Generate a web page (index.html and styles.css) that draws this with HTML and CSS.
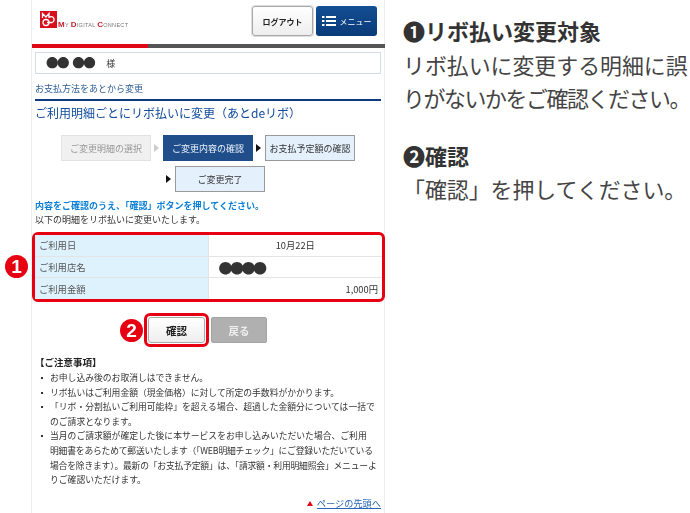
FILE: index.html
```html
<!DOCTYPE html>
<html lang="ja">
<head>
<meta charset="utf-8">
<title>ご利用明細ごとにリボ払いに変更</title>
<link rel="stylesheet" href="styles.css">
</head>
<body>
<div class="page">
  <main class="phone">
    <header class="top">
      <div class="logo">
        <svg class="logo-mark" width="17" height="17" viewBox="0 0 17 17"><rect width="17" height="17" fill="#d9101c"/><g fill="none" stroke="#fff" stroke-width="1.3"><path d="M2.500 7V2.500L6 6l3-3.500V7"/><circle cx="6" cy="11.500" r="3"/><path d="M9 6.500a3 3 0 1 1 3 5H7"/></g></svg>
        <span class="logo-text"><b>M</b>Y <b>D</b>IGITAL <b>C</b>ONNECT</span>
      </div>
      <div class="top-btns">
        <span class="btn-logout">ログアウト</span>
        <span class="btn-menu">
          <svg width="14" height="10" viewBox="0 0 14 10"><g fill="#fff"><rect x="0" y="0" width="2.500" height="2"/><rect x="0" y="4" width="2.500" height="2"/><rect x="0" y="8" width="2.500" height="2"/><rect x="4" y="0" width="10" height="2"/><rect x="4" y="4" width="10" height="2"/><rect x="4" y="8" width="10" height="2"/></g></svg>
          <span>メニュー</span>
        </span>
      </div>
    </header>
    <div class="progress"><span class="progress-red"></span></div>
    <div class="name-box"><span class="name-dots">●● ●●</span><span class="name-sama">様</span></div>
    <p class="crumb">お支払方法をあとから変更</p>
    <h1 class="title">ご利用明細ごとにリボ払いに変更（あとdeリボ）</h1>
    <ol class="steps">
      <li class="step step-done">ご変更明細の選択</li>
      <li class="arrow arrow-grey"></li>
      <li class="step step-now">ご変更内容の確認</li>
      <li class="arrow"></li>
      <li class="step step-next">お支払予定額の確認</li>
      <li class="break"></li>
      <li class="arrow arrow-wrap"></li>
      <li class="step step-next">ご変更完了</li>
    </ol>
    <p class="lead">内容をご確認のうえ、「確認」ボタンを押してください。</p>
    <p class="sub">以下の明細をリボ払いに変更いたします。</p>
    <div class="hl-table">
      <span class="marker marker-1">1</span>
      <table class="detail">
        <tr><th>ご利用日</th><td class="c">10月22日</td></tr>
        <tr><th>ご利用店名</th><td class="dots">●●●●</td></tr>
        <tr><th>ご利用金額</th><td class="r">1,000円</td></tr>
      </table>
    </div>
    <div class="actions">
      <span class="marker marker-2">2</span>
      <span class="hl-btn"><span class="btn-ok">確認</span></span>
      <span class="btn-back">戻る</span>
    </div>
    <h2 class="note-head">【ご注意事項】</h2>
    <ul class="notes">
      <li>お申し込み後のお取消しはできません。</li>
      <li>リボ払いはご利用金額（現金価格）に対して所定の手数料がかかります。</li>
      <li>「リボ・分割払いご利用可能枠」を超える場合、超過した金額分については一括で<br>のご請求となります。</li>
      <li>当月のご請求額が確定した後に本サービスをお申し込みいただいた場合、ご利用<br><span class="tight-line">明細書をあらためて郵送いたします（「WEB明細チェック」にご登録いただいている</span><br><span class="tight-line">場合を除きます）。最新の「お支払予定額」は、「請求額・利用明細照会」メニューよ</span><br>りご確認いただけます。</li>
    </ul>
    <p class="pagetop"><span class="tri"></span><a href="#">ページの先頭へ</a></p>
  </main>
  <aside class="guide">
    <h2>❶リボ払い変更対象</h2>
    <p>リボ払いに変更する明細に誤<br><span class="tight">りがないかをご確認ください。</span></p>
    <h2 class="g2">❷確認</h2>
    <p>「確認」を押してください。</p>
  </aside>
</div>
</body>
</html>
```
FILE: styles.css
```css
* { box-sizing: border-box; }
html, body { margin: 0; padding: 0; background: #fff; }
body { width: 690px; height: 513px; overflow: hidden; font-family: "Noto Sans CJK JP", "Noto Sans", sans-serif; color: #333; }
p, h1, h2, ul, ol { margin: 0; padding: 0; }
.page { display: flex; align-items: flex-start; padding-left: 31px; }

.phone { width: 354px; height: 513px; flex: none; border-left: 1px solid #eceef2; border-right: 1px solid #eceef2; font-size: 10px; position: relative; filter: blur(.3px); }
.top { height: 44px; display: flex; justify-content: space-between; padding: 6px 7px 0 8px; }
.logo { display: flex; align-items: flex-start; padding-top: 5px; }
.logo-mark { flex: none; }
.logo-text { font-family: "Liberation Sans", sans-serif; font-size: 5.500px; color: #777; margin-top: 9px; margin-left: 1px; white-space: nowrap; letter-spacing: .3px; }
.logo-text b { font-size: 8px; color: #c8202a; }
.top-btns { display: flex; gap: 3px; }
.btn-logout, .btn-menu { width: 61px; height: 30px; border-radius: 3px; display: flex; align-items: center; justify-content: center; font-size: 8px; font-weight: 700; }
.btn-logout { background: linear-gradient(#fff, #eee); border: 1px solid #a8a8a8; box-shadow: 0 0 0 1px #ddd; color: #222; }
.btn-menu { background: linear-gradient(#134e93, #0a3a78); color: #fff; gap: 4px; font-weight: 400; }
.progress { height: 4px; background: #555; margin-right: -1px; }
.progress-red { display: block; width: 116px; height: 4px; background: #df0615; }
.name-box { margin: 4px 3px 0 3px; height: 22px; border: 1px solid #d4dce8; display: flex; align-items: center; padding-left: 10px; }
.name-dots { font-size: 12.500px; letter-spacing: -1.500px; word-spacing: 3px; color: #333; line-height: 1; }
.name-sama { font-size: 9px; margin-left: 12px; }
.crumb { margin: 7px 0 0 3px; font-size: 9px; line-height: 16px; color: #2a5c96; }
.title { margin: 2px 3px 0 3px; border-top: 2px solid #0d3a80; font-size: 12px; font-weight: 400; line-height: 24px; color: #0f4a9c; white-space: nowrap; }

.steps { list-style: none; display: flex; flex-wrap: wrap; justify-content: center; align-items: center; margin: 10px 0 0; }
.step { width: 90px; height: 26px; display: flex; align-items: center; justify-content: center; font-size: 9px; white-space: nowrap; }
.step-done { background: #f0f0f0; border: 1px solid #e2e2e2; color: #999; }
.step-now { background: #1f4e8a; color: #e8f0fa; }
.step-next { background: #e4f1fd; border: 1px solid #999; color: #333; }
.arrow { width: 5px; height: 8px; margin: 0 4px 0 3px; border-left: 5px solid #111; border-top: 4px solid transparent; border-bottom: 4px solid transparent; }
.arrow-grey { border-left-color: #ccc; }
.arrow-wrap { margin-left: 15px; }
.break { width: 100%; height: 5px; }
.lead { margin: 6px 0 0 3px; font-size: 9px; line-height: 16px; font-weight: 700; color: #0a7fd8; white-space: nowrap; }
.sub { margin: -1px 0 0 3px; font-size: 9px; line-height: 14px; color: #333; white-space: nowrap; }

.hl-table { margin: 5px -1px 0 0; height: 70px; border: 3px solid #e60012; border-radius: 6px; position: relative; }
.detail { width: 100%; height: 64px; border-collapse: collapse; font-size: 9.300px; }
.detail th, .detail td { border-bottom: 1px solid #e4e4e4; padding: 0 4px; font-weight: 400; }
.detail tr:last-child th, .detail tr:last-child td { border-bottom: 0; }
.detail th { width: 173px; background: #def2fd; color: #555; text-align: left; border-right: 1px solid #e4e4e4; }
.detail .c { text-align: center; }
.detail .r { text-align: right; }
.detail .dots { font-size: 14px; padding-left: 10px; letter-spacing: -2.500px; line-height: 1; }

.marker { position: absolute; width: 23px; height: 23px; border-radius: 50%; background: #e60012; color: #fff; font: 700 19px/23px "Liberation Sans", sans-serif; text-align: center; }
.marker-1 { left: -30px; top: 20px; }
.marker-2 { left: 88px; top: 6px; }

.actions { position: relative; display: flex; margin-top: 11px; height: 34px; padding-left: 112px; gap: 2px; align-items: center; }
.hl-btn { width: 65px; height: 34px; border: 3px solid #e60012; border-radius: 6px; padding: 1px; display: flex; }
.btn-ok { flex: 1; border: 1px solid #aaa; border-radius: 3px; background: linear-gradient(#fff, #eee); display: flex; align-items: center; justify-content: center; font-size: 10.500px; font-weight: 700; color: #222; }
.btn-back { width: 56px; height: 26px; border-radius: 2px; background: #b0b0b0; border: 1px solid #a4a4a4; display: flex; align-items: center; justify-content: center; font-size: 10.500px; font-weight: 700; color: #eee; }

.note-head { margin: 8px 0 0 3px; font-size: 9.500px; line-height: 15px; font-weight: 700; color: #222; }
.notes { list-style: none; margin-top: 1px; padding-left: 18px; }
.notes li { position: relative; font-size: 8.800px; line-height: 14.600px; color: #333; white-space: nowrap; }
.notes li::before { content: ""; position: absolute; left: -9px; top: 6px; width: 2px; height: 2px; background: #333; }
.notes .tight-line { letter-spacing: -.2px; }
.pagetop { position: absolute; right: 3px; top: 496px; display: flex; align-items: center; gap: 4px; font-size: 9.200px; line-height: 14px; }
.pagetop a { color: #2a66b8; text-decoration: underline; }
.tri { width: 0; height: 0; border-left: 3px solid transparent; border-right: 3px solid transparent; border-bottom: 5px solid #e60012; }

.guide { margin-left: 18px; width: 287px; padding-top: 14px; font-size: 21.900px; line-height: 33.500px; color: #444; white-space: nowrap; }
.guide h2 { font-size: 22px; line-height: 33.500px; font-weight: 700; color: #333; }
.guide p { color: #444; }
.guide .tight { letter-spacing: -1.400px; }
.guide .g2 { margin-top: 24px; }
```
